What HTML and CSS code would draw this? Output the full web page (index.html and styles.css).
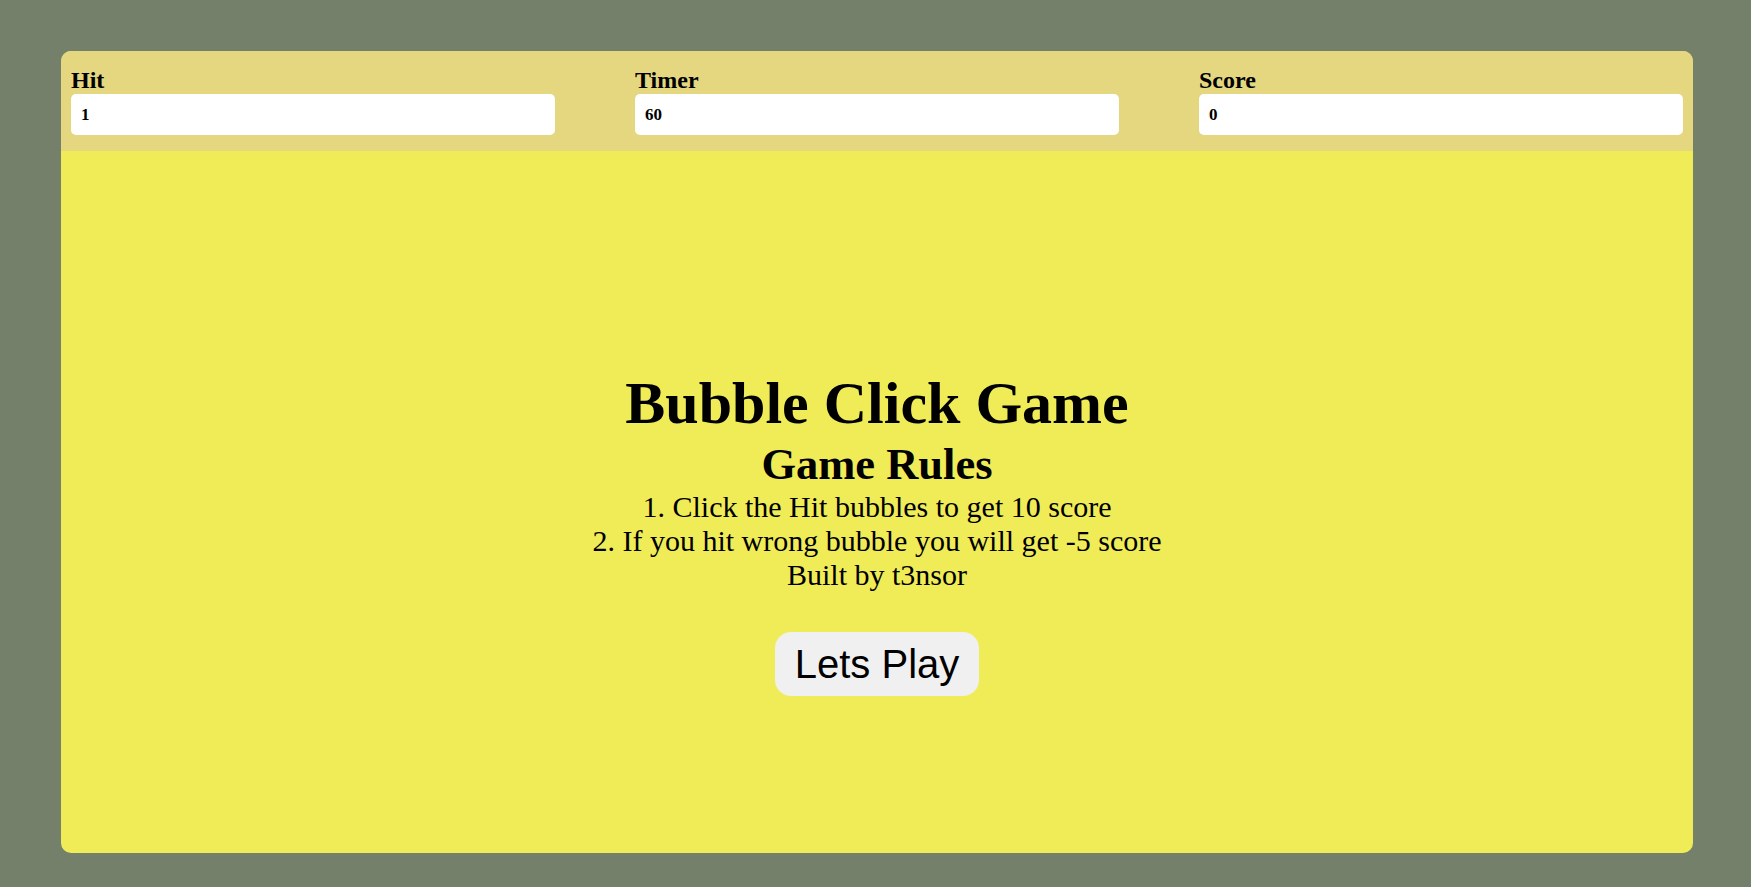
FILE: index.html
```html
<!DOCTYPE html>
<html lang="en">
<head>
<meta charset="utf-8">
<title>Bubble Click Game</title>
<link rel="stylesheet" href="styles.css">
</head>
<body>
  <div class="panel">
    <div class="topbar">
      <div class="field">
        <label class="field-label" for="hit">Hit</label>
        <input class="field-input" id="hit" type="text" value="1" readonly>
      </div>
      <div class="field">
        <label class="field-label" for="timer">Timer</label>
        <input class="field-input" id="timer" type="text" value="60" readonly>
      </div>
      <div class="field">
        <label class="field-label" for="score">Score</label>
        <input class="field-input" id="score" type="text" value="0" readonly>
      </div>
    </div>
    <div class="board">
      <h1 class="title">Bubble Click Game</h1>
      <h2 class="subtitle">Game Rules</h2>
      <p class="rule">1. Click the Hit bubbles to get 10 score</p>
      <p class="rule">2. If you hit wrong bubble you will get -5 score</p>
      <p class="rule">Built by t3nsor</p>
      <button class="play-btn" type="button">Lets Play</button>
    </div>
  </div>
</body>
</html>
```

FILE: styles.css
```css
html, body {
  margin: 0;
  padding: 0;
}

body {
  background: #74806a;
  font-family: "Liberation Serif", "Times New Roman", serif;
  color: #000;
  width: 1751px;
  height: 887px;
  overflow: hidden;
}

.panel {
  margin: 51px 0 0 61px;
  width: 1632px;
  height: 802px;
  border-radius: 10px;
  overflow: hidden;
  display: flex;
  flex-direction: column;
  background: #f0ec58;
}

.topbar {
  box-sizing: border-box;
  height: 100px;
  flex: 0 0 100px;
  background: #e4d780;
  display: grid;
  grid-template-columns: repeat(3, 484px);
  justify-content: space-between;
  align-content: start;
  padding: 15px 10px 0;
}

.field {
  display: flex;
  flex-direction: column;
}

.field-label {
  font-family: "Liberation Serif", "Times New Roman", serif;
  font-weight: bold;
  font-size: 24px;
  line-height: 28px;
  color: #000;
}

.field-input {
  box-sizing: border-box;
  width: 484px;
  height: 41px;
  border: none;
  border-radius: 5px;
  background: #fff;
  padding: 0 10px;
  font-family: "Liberation Serif", "Times New Roman", serif;
  font-weight: bold;
  font-size: 17px;
  color: #000;
  outline: none;
}

.board {
  flex: 1;
  display: flex;
  flex-direction: column;
  align-items: center;
  padding-top: 218px;
  text-align: center;
}

.title {
  margin: 0;
  font-size: 60px;
  font-weight: bold;
  line-height: normal;
}

.subtitle {
  margin: 0;
  font-size: 44.5px;
  font-weight: bold;
  line-height: normal;
}

.rule {
  margin: 0;
  font-size: 30px;
  line-height: normal;
}

.play-btn {
  margin-top: 40px;
  border: none;
  border-radius: 16px;
  background: #f0f0f0;
  padding: 9px 20px;
  font-family: "Liberation Sans", Arial, sans-serif;
  font-size: 40px;
  line-height: 46px;
  color: #000;
  cursor: pointer;
}
```
